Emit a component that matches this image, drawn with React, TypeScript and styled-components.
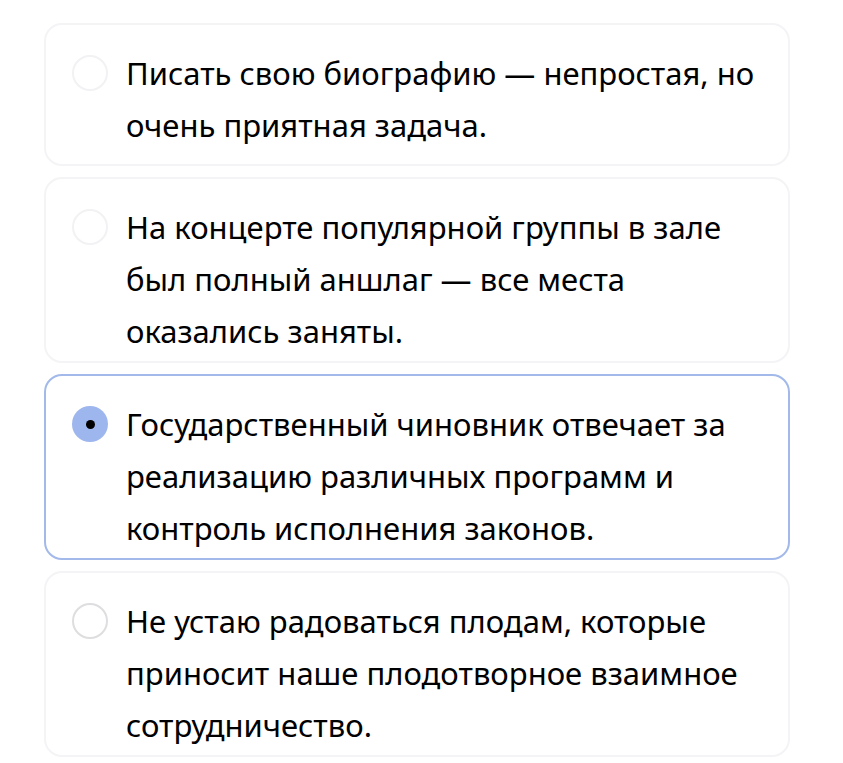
import styled, { createGlobalStyle } from 'styled-components';

const GlobalStyle = createGlobalStyle`
  body {
    margin: 0;
    background: #ffffff;
    font-family: 'Noto Sans', 'Open Sans', sans-serif;
  }
`;

const List = styled.div`
  display: flex;
  flex-direction: column;
  gap: 11px;
  width: 746px;
  padding: 23px 0 0 44px;
`;

const Card = styled.label<{ selected?: boolean }>`
  display: flex;
  align-items: flex-start;
  gap: 18px;
  box-sizing: border-box;
  min-height: 143px;
  padding: 22px 28px 4px 26px;
  border: 2px solid ${(p) => (p.selected ? '#a2b9ea' : '#f4f4f6')};
  border-radius: 18px;
  background: #ffffff;
`;

const Radio = styled.span<{ selected?: boolean; faint?: boolean }>`
  flex: none;
  width: 36px;
  height: 36px;
  margin-top: 8px;
  border-radius: 50%;
  box-sizing: border-box;
  display: flex;
  align-items: center;
  justify-content: center;
  background: ${(p) => (p.selected ? '#9db6ee' : '#ffffff')};
  border: ${(p) =>
    p.selected ? 'none' : `2px solid ${p.faint ? '#f2f2f4' : '#dedee0'}`};

  &::after {
    content: '';
    display: ${(p) => (p.selected ? 'block' : 'none')};
    width: 9px;
    height: 9px;
    border-radius: 50%;
    background: #000;
  }
`;

const Text = styled.span`
  font-size: 31px;
  line-height: 52px;
  color: #000;
`;

const options = [
  {
    text: 'Писать свою биографию — непростая, но очень приятная задача.',
    faint: true,
  },
  {
    text: 'На концерте популярной группы в зале был полный аншлаг — все места оказались заняты.',
    faint: true,
  },
  {
    text: 'Государственный чиновник отвечает за реализацию различных программ и контроль исполнения законов.',
    selected: true,
  },
  {
    text: 'Не устаю радоваться плодам, которые приносит наше плодотворное взаимное сотрудничество.',
  },
];

export default function App() {
  return (
    <>
      <GlobalStyle />
      <List>
        {options.map((o, i) => (
          <Card key={i} selected={o.selected}>
            <Radio selected={o.selected} faint={o.faint} />
            <Text>{o.text}</Text>
          </Card>
        ))}
      </List>
    </>
  );
}
